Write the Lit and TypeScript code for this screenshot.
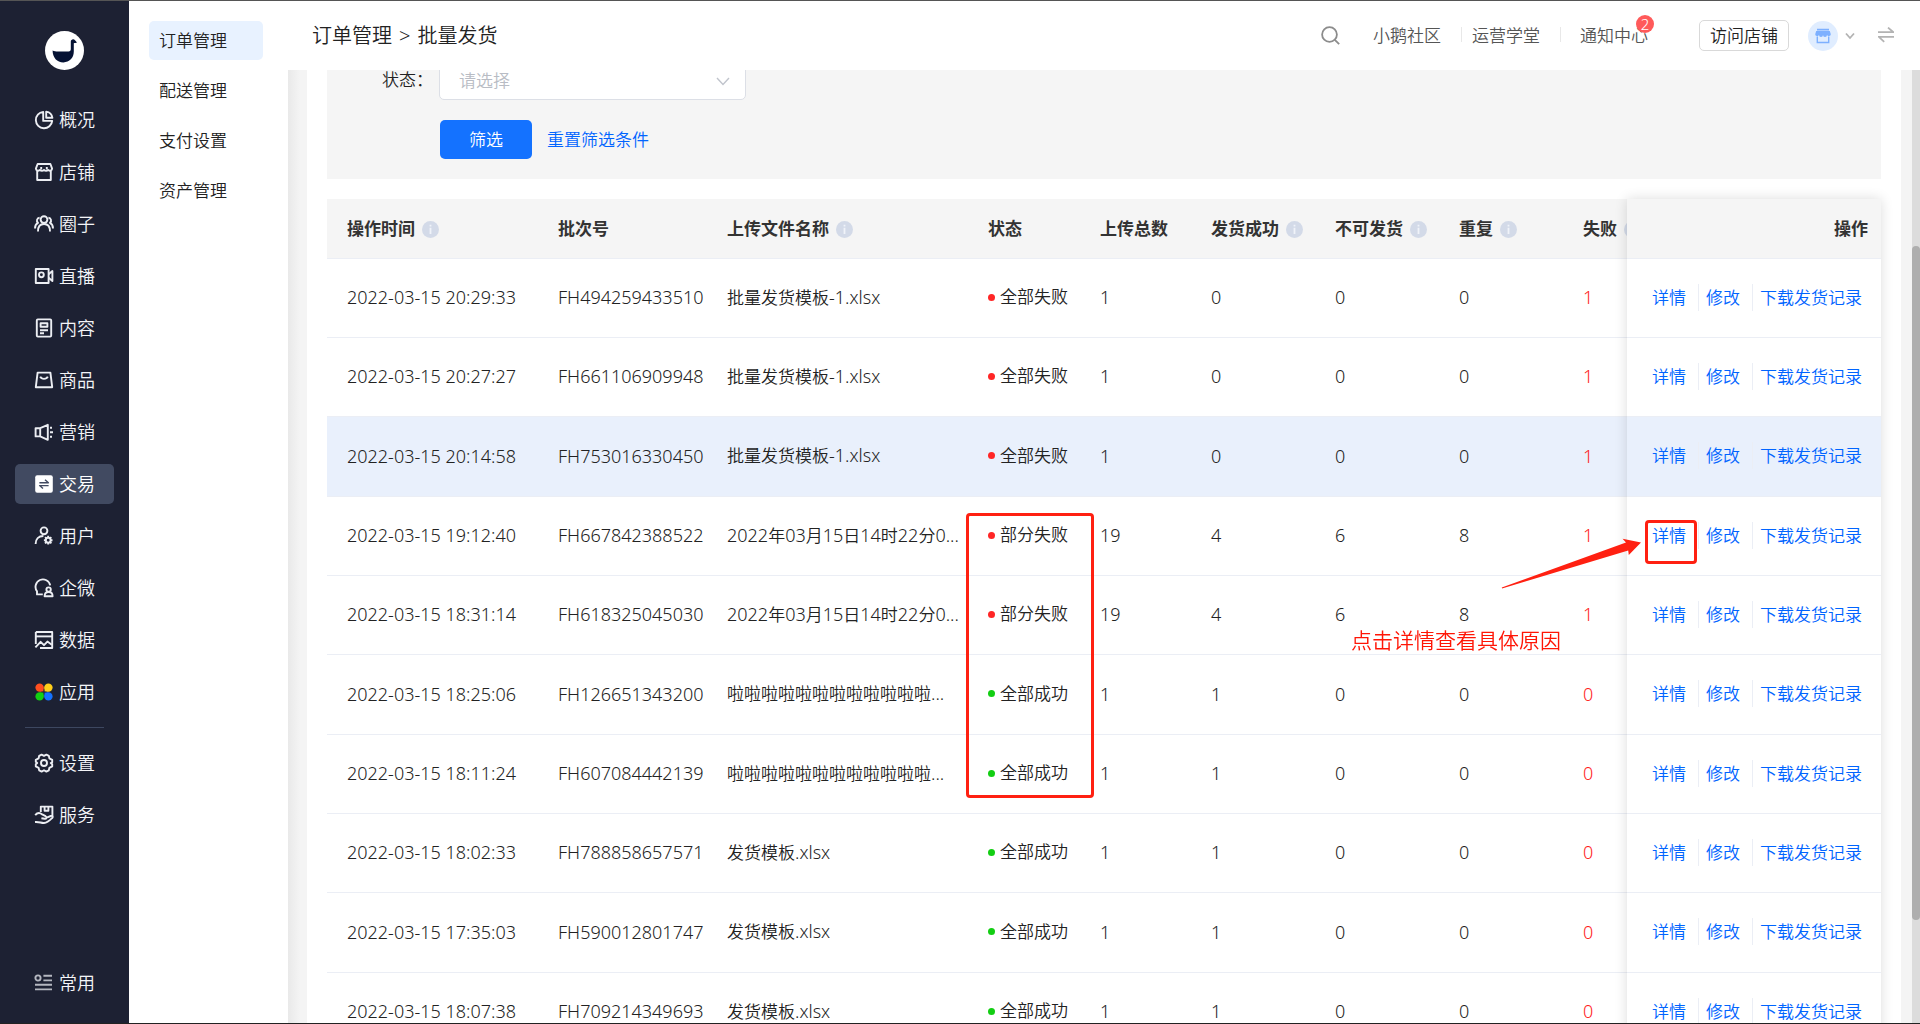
import { LitElement, html, css, svg, TemplateResult, SVGTemplateResult } from "lit";
import { customElement, state } from "lit/decorators.js";
import { classMap } from "lit/directives/class-map.js";

const icons: Record<string, SVGTemplateResult> = {
  overview: svg`<path d="M9.2 1.9a8.2 8.2 0 1 0 9 9H9.2z"/><path d="M12.2 1.6a7.4 7.4 0 0 1 6.2 6.2h-6.2z"/>`,
  shop: svg`<path d="M3.2 9v9h13.6V9"/><path d="M3.6 2h12.8l1.7 4.6a2.3 2.3 0 0 1-4 1.3 2.7 2.7 0 0 1-4.1 0 2.7 2.7 0 0 1-4.1 0 2.3 2.3 0 0 1-4-1.3z"/><path d="M7.2 5v2.6M12.8 5v2.6"/>`,
  circle: svg`<circle cx="10" cy="5.6" r="3.4"/><path d="M4 17.4c0-5 2.400-7.400 6-7.400s6 2.400 6 7.400"/><path d="M5.600 3.800a2.800 2.800 0 0 0-1.600 5C2 9.800 1 11.800 1 14.400M14.400 3.800a2.800 2.800 0 0 1 1.600 5c2 1 3 3 3 5.600"/>`,
  live: svg`<path d="M14.600 3H1.800v14h12.800z"/><circle cx="7.400" cy="8.800" r="2.400"/><path d="M14.600 8.200 18.400 5v10l-3.800-3.200"/>`,
  content: svg`<rect x="2.800" y="1.400" width="14.400" height="17.200" rx="1"/><rect x="6.600" y="5.200" width="6.800" height="3.600"/><path d="M6 12.200h8M6 15.200h4"/>`,
  goods: svg`<path d="M3.600 2.600h12.800l1.800 14.600H1.800z"/><path d="M6.200 6.600c1.400 3 6.200 3 7.600 0"/>`,
  marketing: svg`<path d="M1.600 6.200h4.600v8.200H1.600zM6.200 6.200l7.600-3.400v15L6.200 14.400"/><path d="M16 5.800h2M16 10.300h3M16 14.800h2"/>`,
  trade: svg`<rect class="solid" x="1.200" y="1.200" width="17.600" height="17.600" rx="2"/><path class="cut" d="M5.400 8.800h9l-3.400-3M14.600 11.600h-9l3.400 3"/>`,
  user: svg`<circle cx="10" cy="4.800" r="3.400"/><path d="M1.600 18c0-4.800 3-8 7.800-8"/><circle cx="14.200" cy="14.200" r="2.400"/><path d="M14.200 9.800v2M14.200 16.600v2M9.900 14.200h2M16.500 14.200h2M11.100 11.100l1.500 1.500M15.900 15.900l1.500 1.500M17.300 11.100l-1.500 1.500M12.500 15.900l-1.500 1.500"/>`,
  wecom: svg`<path d="M8.800 16.400H3v-3.200a7.400 7.400 0 1 1 13.200-5.800"/><circle cx="14.600" cy="11.600" r="2.200"/><path d="M10.600 18.200c0-2.600 1.600-4.200 4-4.200s4 1.600 4 4.200z"/>`,
  data: svg`<path d="M1.800 2h16.400v16H6M1.800 14V2"/><path d="M2 6.400h16"/><path d="M1.400 17.400l5.200-5.600 3.400 3.400 3.400-3.600 4.400 3.200"/>`,
  apps: svg`<circle class="c1" cx="5.600" cy="5.600" r="4.200"/><circle class="c2" cx="14.400" cy="5.600" r="4.200"/><circle class="c3" cx="5.600" cy="14.400" r="4.200"/><circle class="c4" cx="14.400" cy="14.400" r="4.200"/><rect class="c1" x="6" y="6" width="3.400" height="3.400"/><rect class="c2" x="10.600" y="6" width="3.400" height="3.400"/><rect class="c3" x="6" y="10.600" width="3.400" height="3.400"/><rect class="c4" x="10.600" y="10.600" width="3.400" height="3.400"/>`,
  settings: svg`<path d="M7.600 1.600 10 2.800l2.400-1.200 2.400 1.200.6 2.600 2.800 1.400v2.400L16.800 10l1.400 1.200v2.200l-2.800 1.400-.6 2.600-2.400 1.200L10 17.200l-2.400 1.400-2.400-1.200-.6-2.600-2.800-1.400v-2.200L3.200 10 1.800 8.800V6.800l2.800-1.400.6-2.600z"/><circle cx="10" cy="10" r="3"/>`,
  service: svg`<path d="M6.800 7V1.600h11.600v9.800"/><path d="M10.600 2v3.800h3.800V2"/><path d="M1.200 10.200c2-2.400 4.600-2.600 7-.8l3.400 1.800c1.600 1 .8 2.800-.8 2.600l-3.400-.6M12.600 12.600l4.200-1.600c2-.6 2.400 1.200 1.200 2.200-2.600 2.600-5.400 4.600-8 4.800-3 .2-4.600-1.400-9-1"/>`,
  common: svg`<circle cx="4" cy="5" r="2.600"/><path d="M9.400 2.800H18M9.400 7.400H18M1 11.800h17M1 16.400h17"/>`,
};

interface NavItem { icon: string; label: string; active?: boolean }

const mainNav: NavItem[] = [
  { icon: "overview", label: "概况" },
  { icon: "shop", label: "店铺" },
  { icon: "circle", label: "圈子" },
  { icon: "live", label: "直播" },
  { icon: "content", label: "内容" },
  { icon: "goods", label: "商品" },
  { icon: "marketing", label: "营销" },
  { icon: "trade", label: "交易", active: true },
  { icon: "user", label: "用户" },
  { icon: "wecom", label: "企微" },
  { icon: "data", label: "数据" },
  { icon: "apps", label: "应用" },
];
const toolNav: NavItem[] = [
  { icon: "settings", label: "设置" },
  { icon: "service", label: "服务" },
];
const commonNav: NavItem = { icon: "common", label: "常用" };
const subNav = ["订单管理", "配送管理", "支付设置", "资产管理"];

interface Column { key: string; label: string; info?: boolean }

const columns: Column[] = [
  { key: "time", label: "操作时间", info: true },
  { key: "batch", label: "批次号" },
  { key: "file", label: "上传文件名称", info: true },
  { key: "status", label: "状态" },
  { key: "total", label: "上传总数" },
  { key: "success", label: "发货成功", info: true },
  { key: "blocked", label: "不可发货", info: true },
  { key: "repeat", label: "重复", info: true },
  { key: "failed", label: "失败", info: true },
];

type Row = [string, string, string, string, number, number, number, number, number];

const rows: Row[] = [
  ["2022-03-15 20:29:33", "FH494259433510", "批量发货模板-1.xlsx", "全部失败", 1, 0, 0, 0, 1],
  ["2022-03-15 20:27:27", "FH661106909948", "批量发货模板-1.xlsx", "全部失败", 1, 0, 0, 0, 1],
  ["2022-03-15 20:14:58", "FH753016330450", "批量发货模板-1.xlsx", "全部失败", 1, 0, 0, 0, 1],
  ["2022-03-15 19:12:40", "FH667842388522", "2022年03月15日14时22分0...", "部分失败", 19, 4, 6, 8, 1],
  ["2022-03-15 18:31:14", "FH618325045030", "2022年03月15日14时22分0...", "部分失败", 19, 4, 6, 8, 1],
  ["2022-03-15 18:25:06", "FH126651343200", "啦啦啦啦啦啦啦啦啦啦啦啦...", "全部成功", 1, 1, 0, 0, 0],
  ["2022-03-15 18:11:24", "FH607084442139", "啦啦啦啦啦啦啦啦啦啦啦啦...", "全部成功", 1, 1, 0, 0, 0],
  ["2022-03-15 18:02:33", "FH788858657571", "发货模板.xlsx", "全部成功", 1, 1, 0, 0, 0],
  ["2022-03-15 17:35:03", "FH590012801747", "发货模板.xlsx", "全部成功", 1, 1, 0, 0, 0],
  ["2022-03-15 18:07:38", "FH709214349693", "发货模板.xlsx", "全部成功", 1, 1, 0, 0, 0],
];

const shared = css`
  * { box-sizing: border-box; }
  a { color: inherit; text-decoration: none; }
  button { font: inherit; cursor: pointer; }
  svg { display: block; flex: none; }
`;

@customElement("side-nav")
class SideNav extends LitElement {
  static styles = [shared, css`
    :host { display: flex; flex: none; }
    .rail { display: flex; flex-direction: column; width: 129px; padding: 30px 15px 20px; background: #1d2133; color: #f4f5f8; font-size: 18px; line-height: 24px; }
    .logo { align-self: center; margin-bottom: 30px; }
    .group { display: flex; flex-direction: column; gap: 12px; }
    .rule { height: 1px; margin: 15px 10px; border: 0; background: #3d4760; flex: none; }
    .item { display: flex; align-items: center; gap: 5px; height: 40px; padding-left: 19px; border-radius: 5px; }
    .item.active { background: #414a61; color: #fff; }
    .item svg { fill: none; stroke: #eceef3; stroke-width: 1.9; stroke-linejoin: round; }
    .item .solid { fill: #fff; stroke: none; }
    .item .cut { stroke: #414a61; stroke-width: 1.4; }
    .c1, .c2, .c3, .c4 { stroke: none; }
    .c1 { fill: #ff4f1f; }
    .c2 { fill: #ffce1a; }
    .c3 { fill: #12cf12; }
    .c4 { fill: #1472ff; }
    .bottom { margin-top: auto; }
    .bottom .item svg { stroke: #b4b7c0; }
    .sub { display: flex; flex-direction: column; gap: 11px; width: 159px; padding: 20px; background: #fff; font-size: 17px; line-height: 24px; }
    .subitem { display: flex; align-items: center; width: 114px; height: 39px; padding-left: 10px; border-radius: 5px; }
    .subitem.active { background: #e8f2ff; }
  `];

  private item(n: NavItem): TemplateResult {
    return html`<a href="#" class=${classMap({ item: true, active: !!n.active })}>
      <svg width="20" height="20" viewBox="0 0 20 20" aria-hidden="true">${icons[n.icon]}</svg>${n.label}</a>`;
  }

  render() {
    return html`
      <nav class="rail">
        <svg class="logo" width="39" height="39" viewBox="0 0 39 39" aria-hidden="true">
          <circle cx="19.500" cy="19.500" r="19.500" fill="#fff"/>
          <path fill="#051234" d="M7.600 19.400c2.400 1.400 5.200 1 8.400 1h7.600c1.600 0 2.200-.8 2.200-2.400V10.600c0-2.400 3-3.200 4.200-1.400l2 2.400c-1 .6-2.200.6-3.200.6v8.400c0 6.400-4.400 10.800-10.400 10.800-6.400 0-10.800-5-10.800-12z"/>
        </svg>
        <div class="group">${mainNav.map((n) => this.item(n))}</div>
        <hr class="rule">
        <div class="group">${toolNav.map((n) => this.item(n))}</div>
        <div class="bottom">${this.item(commonNav)}</div>
      </nav>
      <nav class="sub">
        ${subNav.map((s, i) => html`<a href="#" class=${classMap({ subitem: true, active: i === 0 })}>${s}</a>`)}
      </nav>`;
  }
}

@customElement("top-bar")
class TopBar extends LitElement {
  static styles = [shared, css`
    :host { display: flex; align-items: center; flex: none; height: 69px; padding: 0 26px 0 24px; background: #fff; color: #555; font-size: 17px; line-height: 24px; }
    .crumbs { display: flex; gap: 7px; margin-right: auto; color: #222; font-size: 20px; }
    .icon { display: flex; padding: 0; border: 0; background: none; }
    svg { fill: none; stroke: #8c8c8c; stroke-width: 1.8; }
    .links { display: flex; margin: 0 51px 0 33px; }
    .link { position: relative; padding: 0 20px 0 11px; }
    .link:first-child { padding-left: 0; }
    .link:last-child { padding: 0 0 0 20px; }
    .link + .link::before { content: ""; position: absolute; left: 0; top: 3px; width: 1px; height: 15px; background: #e8e8e8; }
    .badge { position: absolute; right: -6px; top: -9px; width: 18px; height: 18px; border-radius: 9px; background: #ff5a5a; color: #fff; font-size: 15px; line-height: 18px; text-align: center; }
    .visit { width: 90px; height: 31px; padding: 0; border: 1px solid #d9d9d9; border-radius: 5px; background: #fff; color: #222; }
    .account { display: flex; align-items: center; gap: 6px; margin: 0 22px 0 19px; padding: 0; border: 0; background: none; }
    .avatar { display: flex; align-items: center; justify-content: center; width: 30px; height: 30px; border-radius: 15px; background: #e0edff; }
    .shop { fill: #7db0ff; stroke: none; }
    .faint { stroke: #b3b3b3; }
  `];

  render() {
    return html`
      <div class="crumbs"><a href="#">订单管理</a><span>&gt;</span><span>批量发货</span></div>
      <button class="icon" aria-label="搜索"><svg width="19" height="19" viewBox="0 0 19 19"><circle cx="8.500" cy="8.500" r="7.400"/><path d="M13.800 13.800l4.400 4.400"/></svg></button>
      <nav class="links">
        <a class="link" href="#">小鹅社区</a>
        <a class="link" href="#">运营学堂</a>
        <a class="link" href="#">通知中心<span class="badge">2</span></a>
      </nav>
      <button class="visit">访问店铺</button>
      <button class="account" aria-label="账号">
        <span class="avatar"><svg class="shop" width="16" height="16" viewBox="0 0 16 16"><path d="M2 .8h12v1.600H2zM1.200 3h13.600l1 3.200a2 2 0 0 1-3.800.8 2 2 0 0 1-4 0 2 2 0 0 1-4 0 2 2 0 0 1-3.800-.8z"/><path d="M1.600 8.400h1.400v5.400h10V8.400h1.400v6.800H1.600z"/></svg></span>
        <svg class="faint" width="12" height="8" viewBox="0 0 12 8"><path d="M2 1.500l4 4.500 4-4.500"/></svg>
      </button>
      <button class="icon" aria-label="切换"><svg class="faint" width="16" height="18" viewBox="0 0 16 18"><path d="M0 5.200h15.400L10 .600M16 9.800H.8L6.200 14.800"/></svg></button>`;
  }
}

@customElement("app-root")
class AppRoot extends LitElement {
  static styles = [shared, css`
    :host { display: flex; height: 100vh; overflow: hidden; border-top: 1px solid #555; border-bottom: 1px solid #222; box-sizing: border-box; background: #fff; color: #222; font-family: "Noto Sans", "Noto Sans CJK SC", sans-serif; font-size: 17px; font-weight: 350; line-height: 24px; }
    * { font-family: inherit; }
    .main { display: flex; flex-direction: column; flex: 1; min-width: 0; }
    .body { display: flex; flex: 1; min-height: 0; background: #f4f4f4; }
    .view { flex: 1; min-width: 0; overflow: hidden; padding: 0 11px 0 19px; background: linear-gradient(to right, #e9e9e9, #f4f4f4 12px); }
    .card { padding: 0 20px; background: #fff; overflow: hidden; }
    .track { width: 8px; padding-top: 176px; background: #dcdcdc; }
    .thumb { height: 674px; border-radius: 4px; background: #aeaeae; }
    .filter { display: flex; flex-direction: column; gap: 20px; margin: -30px 0 20px; padding: 20px 20px 20px 55px; background: #f5f5f5; }
    .field { display: flex; align-items: center; }
    .field label { width: 57px; }
    .picker { position: relative; display: flex; }
    .picker select { appearance: none; width: 307px; height: 40px; padding: 0 20px 0 19px; border: 1px solid #dcdfe6; border-radius: 5px; background: #fff; color: #b8bcc4; font-size: 17px; font-weight: inherit; }
    .picker svg { position: absolute; right: 15px; top: 17px; fill: none; stroke: #c0c4cc; stroke-width: 1.4; pointer-events: none; }
    .actions { display: flex; align-items: center; gap: 15px; padding-left: 58px; }
    .go { width: 92px; height: 39px; padding: 0; border: 0; border-radius: 5px; background: #1472ff; color: #fff; }
    .blue { color: #0064ff; }
    .board { position: relative; }
    .scroll { overflow-x: auto; }
    table { width: 100%; min-width: 1614px; table-layout: fixed; border-collapse: separate; border-spacing: 0; }
    th { height: 60px; padding: 0 0 0 20px; background: #f5f5f5; border-bottom: 1px solid #ebeef5; color: #333; text-align: left; font-weight: 700; }
    td { height: 79px; padding: 0 0 2px 20px; background: #fff; border-bottom: 1px solid #ebeef5; white-space: nowrap; }
    tr:nth-child(3n) td { height: 80px; }
    tr.hover td { background: #e9f0fc; }
    .time { width: 211px; }
    .batch { width: 169px; }
    .status { width: 112px; }
    .total { width: 111px; }
    .success, .blocked, .repeat, .failed { width: 124px; }
    .ops { position: sticky; right: 0; width: 254px; }
    th.ops { padding-right: 13px; text-align: right; }
    .head { display: inline-flex; align-items: center; gap: 7px; vertical-align: middle; }
    .latin { font-size: 18px; }
    .num { font-size: 18px; }
    td.failed { color: #ff1a1a; }
    .state { display: flex; align-items: center; gap: 5px; }
    .state::before { content: ""; width: 7px; height: 7px; border-radius: 4px; background: #ff2626; }
    .state.ok::before { background: #13ce13; }
    .oplist { display: flex; padding-left: 5px; line-height: 27px; color: #0064ff; }
    .oplist a + a { margin-left: 12px; padding-left: 7px; border-left: 1px solid #ebeef5; }
    .lift { position: absolute; top: 0; right: 0; bottom: 0; width: 254px; box-shadow: 0 0 12px rgba(0, 0, 0, 0.14); pointer-events: none; }
    .mark { position: absolute; border: 3px solid #ff2011; border-radius: 4px; pointer-events: none; }
    .mark-status { left: 639px; top: 314px; width: 128px; height: 285px; }
    .mark-detail { right: 184px; top: 321px; width: 52px; height: 44px; }
    .arrow { position: absolute; right: 239px; top: 338px; fill: #ff2011; pointer-events: none; }
    .note { position: absolute; right: 320px; top: 427px; color: #ff1505; font-size: 21px; line-height: 28px; pointer-events: none; }
  `];

  @state() private hovered = 2;

  private mixed(text: string) {
    return text.split(/([\x20-\x7e]+)/).filter(Boolean)
      .map((part) => /^[\x20-\x7e]/.test(part) ? html`<span class="latin">${part}</span>` : part);
  }

  private info() {
    return html`<svg width="17" height="17" viewBox="0 0 17 17" aria-hidden="true"><circle cx="8.500" cy="8.500" r="8.500" fill="#d3dae8"/><path d="M7.600 3.800h1.800v1.800H7.600zM7.600 6.800h1.800v6.200H7.600z" fill="#f0f3f9"/></svg>`;
  }

  private row(r: Row, i: number) {
    const [time, batch, file, status, ...counts] = r;
    return html`<tr class=${classMap({ hover: i === this.hovered })} @mouseenter=${() => (this.hovered = i)}>
      <td class="num">${time}</td>
      <td class="num">${batch}</td>
      <td>${this.mixed(file)}</td>
      <td><span class=${classMap({ state: true, ok: status === "全部成功" })}>${status}</span></td>
      ${counts.map((c, k) => html`<td class=${classMap({ num: true, failed: k === 4 })}>${c}</td>`)}
      <td class="ops"><div class="oplist"><a href="#">详情</a><a href="#">修改</a><a href="#">下载发货记录</a></div></td>
    </tr>`;
  }

  render() {
    return html`
      <side-nav></side-nav>
      <div class="main">
        <top-bar></top-bar>
        <div class="body">
          <main class="view">
            <div class="card">
              <form class="filter" @submit=${(e: Event) => e.preventDefault()}>
                <div class="field">
                  <label for="status">状态：</label>
                  <div class="picker">
                    <select id="status"><option>请选择</option></select>
                    <svg width="16" height="10" viewBox="0 0 16 10" aria-hidden="true"><path d="M2 1l6 6.500L14 1"/></svg>
                  </div>
                </div>
                <div class="actions">
                  <button class="go" type="submit">筛选</button>
                  <a class="blue" href="#">重置筛选条件</a>
                </div>
              </form>
              <div class="board">
                <div class="scroll">
                  <table>
                    <thead><tr>
                      ${columns.map((c) => html`<th class=${c.key}><span class="head">${c.label}${c.info ? this.info() : ""}</span></th>`)}
                      <th class="ops">操作</th>
                    </tr></thead>
                    <tbody>${rows.map((r, i) => this.row(r, i))}</tbody>
                  </table>
                </div>
                <div class="lift"></div>
                <div class="mark mark-status"></div>
                <div class="mark mark-detail"></div>
                <svg class="arrow" width="142" height="54" viewBox="0 0 142 54" aria-hidden="true"><path d="M2 51.500L1.800 50.600 126 5.400 122.600 1.800 141 5.400 128.800 18 128.200 13.600z"/></svg>
                <div class="note">点击详情查看具体原因</div>
              </div>
            </div>
          </main>
          <div class="track"><div class="thumb"></div></div>
        </div>
      </div>`;
  }
}
